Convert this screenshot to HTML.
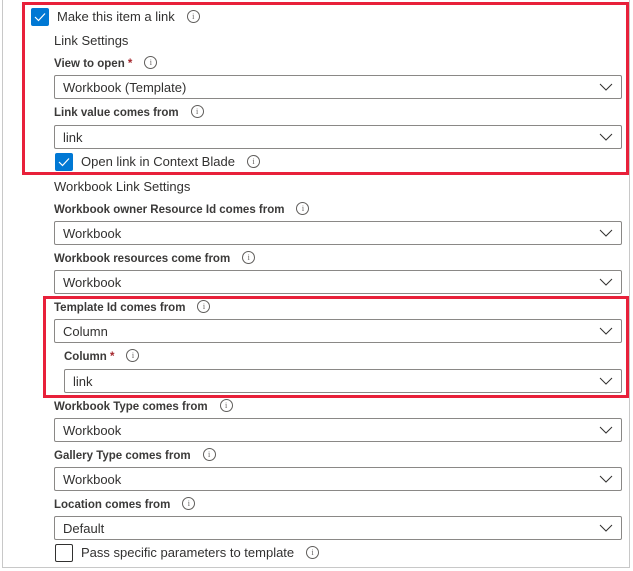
<!DOCTYPE html>
<html><head><meta charset="utf-8"><style>
body{margin:0;width:633px;height:571px;background:#fff;position:relative;overflow:hidden;font-family:"Liberation Sans",sans-serif;color:#323130}
.a{position:absolute}
.frame{left:2px;top:-2px;width:628px;height:570px;border:1px solid #c8c8c8;box-sizing:border-box}
.red{border:3px solid #e8203a;box-sizing:border-box}
.lbl{font-size:11.5px;font-weight:bold;white-space:nowrap;line-height:14px;color:#3b3a39}
.h{font-size:13px;white-space:nowrap;line-height:16px}
.dd{height:24px;border:1px solid #8a8886;border-radius:2px;box-sizing:border-box;font-size:13px;line-height:23px;padding-left:8px}
.dd svg{position:absolute;right:8px;top:7px}
.i{display:inline-block;width:11px;height:11px;border:1px solid #605e5c;border-radius:50%;font-size:8px;line-height:11px;text-align:center;font-weight:normal;vertical-align:middle;margin-left:12px;color:#605e5c;font-family:"Liberation Serif",serif;position:relative;top:-1px}
.star{color:#a4262c}
.cb{width:18px;height:18px;border-radius:2px;box-sizing:border-box}
.on{background:#0078d4}
.off{border:1px solid #323130}
.cb svg{position:absolute;left:3px;top:4px}
</style></head><body>
<div class="a frame"></div>
<div class="a red" style="left:22px;top:2px;width:607px;height:173px"></div>
<div class="a red" style="left:43px;top:296px;width:586px;height:102px"></div>

<div class="a cb on" style="left:31px;top:8px"><svg width="12" height="10"><path d="M1 5l3.5 3.5L11 1.5" stroke="#fff" stroke-width="1.2" fill="none"/></svg></div>
<div class="a h" style="left:57px;top:9px">Make this item a link<span class="i">i</span></div>
<div class="a h" style="left:54px;top:33px">Link Settings</div>
<div class="a lbl" style="left:54px;top:57px">View to open <span class="star">*</span><span class="i">i</span></div>
<div class="a dd" style="left:54px;top:75px;width:568px">Workbook (Template)<svg width="14" height="8"><path d="M1 1l6 6 6-6" stroke="#323130" fill="none"/></svg></div>
<div class="a lbl" style="left:54px;top:106px">Link value comes from<span class="i">i</span></div>
<div class="a dd" style="left:54px;top:125px;width:568px">link<svg width="14" height="8"><path d="M1 1l6 6 6-6" stroke="#323130" fill="none"/></svg></div>
<div class="a cb on" style="left:55px;top:153px"><svg width="12" height="10"><path d="M1 5l3.5 3.5L11 1.5" stroke="#fff" stroke-width="1.2" fill="none"/></svg></div>
<div class="a h" style="left:81px;top:154px">Open link in Context Blade<span class="i">i</span></div>

<div class="a h" style="left:54px;top:179px">Workbook Link Settings</div>
<div class="a lbl" style="left:54px;top:203px">Workbook owner Resource Id comes from<span class="i">i</span></div>
<div class="a dd" style="left:54px;top:221px;width:568px">Workbook<svg width="14" height="8"><path d="M1 1l6 6 6-6" stroke="#323130" fill="none"/></svg></div>
<div class="a lbl" style="left:54px;top:252px">Workbook resources come from<span class="i">i</span></div>
<div class="a dd" style="left:54px;top:270px;width:568px">Workbook<svg width="14" height="8"><path d="M1 1l6 6 6-6" stroke="#323130" fill="none"/></svg></div>
<div class="a lbl" style="left:54px;top:301px">Template Id comes from<span class="i">i</span></div>
<div class="a dd" style="left:54px;top:319px;width:568px">Column<svg width="14" height="8"><path d="M1 1l6 6 6-6" stroke="#323130" fill="none"/></svg></div>
<div class="a lbl" style="left:64px;top:350px">Column <span class="star">*</span><span class="i">i</span></div>
<div class="a dd" style="left:64px;top:369px;width:558px">link<svg width="14" height="8"><path d="M1 1l6 6 6-6" stroke="#323130" fill="none"/></svg></div>
<div class="a lbl" style="left:54px;top:400px">Workbook Type comes from<span class="i">i</span></div>
<div class="a dd" style="left:54px;top:418px;width:568px">Workbook<svg width="14" height="8"><path d="M1 1l6 6 6-6" stroke="#323130" fill="none"/></svg></div>
<div class="a lbl" style="left:54px;top:449px">Gallery Type comes from<span class="i">i</span></div>
<div class="a dd" style="left:54px;top:467px;width:568px">Workbook<svg width="14" height="8"><path d="M1 1l6 6 6-6" stroke="#323130" fill="none"/></svg></div>
<div class="a lbl" style="left:54px;top:498px">Location comes from<span class="i">i</span></div>
<div class="a dd" style="left:54px;top:516px;width:568px">Default<svg width="14" height="8"><path d="M1 1l6 6 6-6" stroke="#323130" fill="none"/></svg></div>
<div class="a cb off" style="left:55px;top:544px"></div>
<div class="a h" style="left:81px;top:545px">Pass specific parameters to template<span class="i">i</span></div>
</body></html>
